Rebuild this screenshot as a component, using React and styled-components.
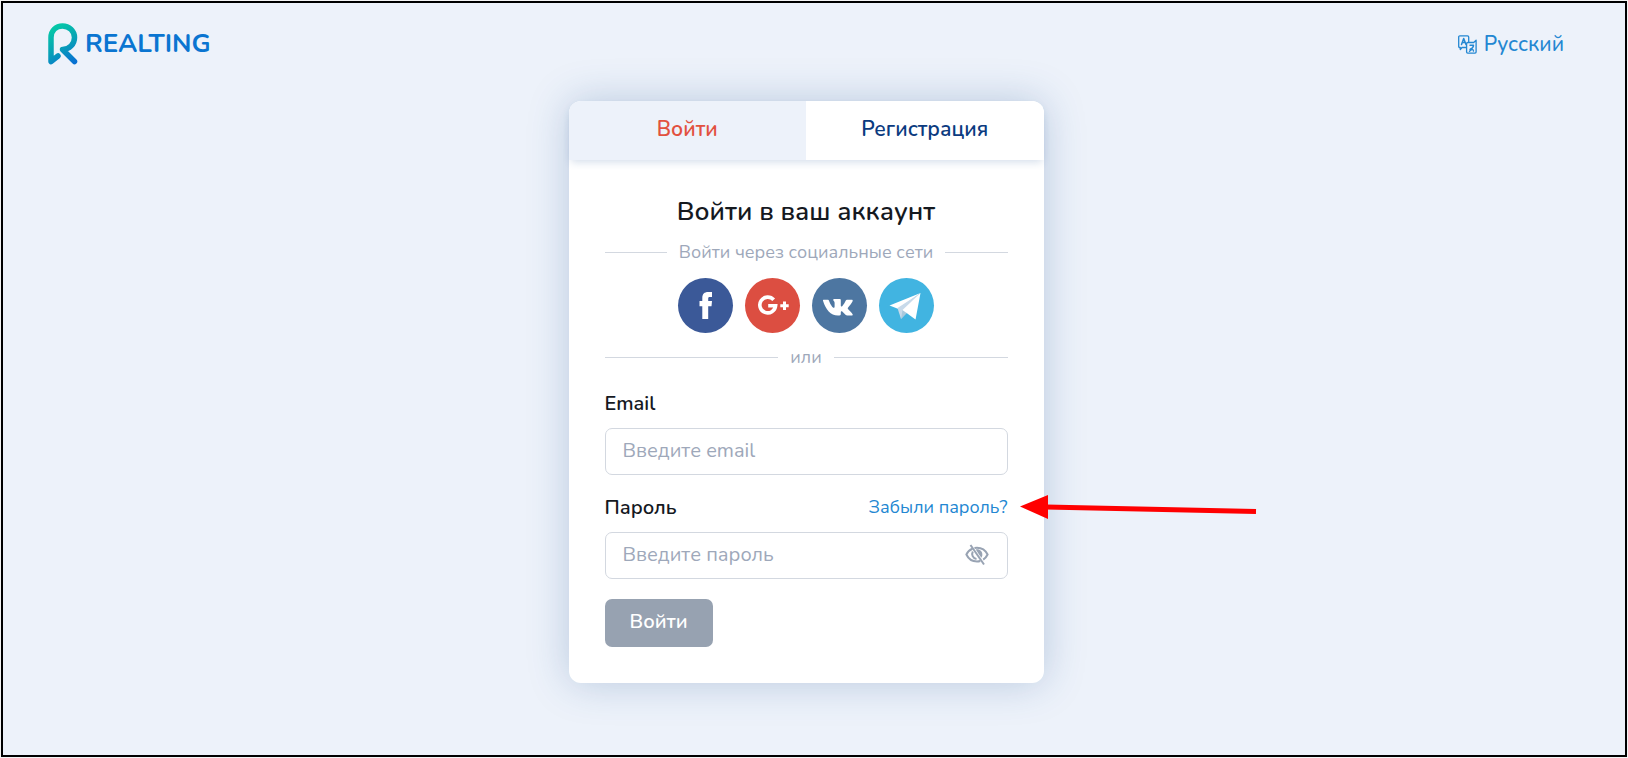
import React, { useState } from 'react';
import styled, { createGlobalStyle } from 'styled-components';


const GlobalStyle = createGlobalStyle`
  * {
    box-sizing:border-box;
  }
  body {
    margin:0;
    background-color:#f4f4f4;
    font-family:Nunito, Lato, "Open Sans", sans-serif;
  }
`

const Page = styled.div`
  min-height:calc(100vh - 2px);
  margin:1px;
  border:2px solid #000000;
  background-color:#edf2fa;
  padding:0 61px 70px 45px;
`

const Header = styled.header`
  display:flex;
  justify-content:space-between;
  align-items:center;
  height:82px;
`

const Logo = styled.a`
  display:flex;
  align-items:center;
  gap:7px;
  color:#0a75d1;
  font-family:Nunito, Lato, sans-serif;
  font-size:26px;
  font-weight:700;
  line-height:42px;
  text-decoration:none;
`

const Language = styled.button`
  display:flex;
  align-items:center;
  gap:7px;
  padding:0;
  border:none;
  background:none;
  color:#2387d2;
  font-family:inherit;
  font-size:21px;
  font-weight:500;
  line-height:28px;
  cursor:pointer;
`

const Card = styled.main`
  width:100%;
  max-width:475px;
  margin:16px auto 0;
  border-radius:12px;
  background-color:#ffffff;
  box-shadow:0 0 40px rgba(34, 84, 148, 0.26);
`

const Tabs = styled.div`
  display:flex;
  border-radius:12px 12px 0 0;
  overflow:hidden;
  box-shadow:0 4px 8px -2px rgba(34, 84, 148, 0.2);
`

const Tab = styled.button`
  flex:1;
  height:59px;
  padding:0 0 4px;
  border:none;
  background-color:${(props) => (props.$active ? '#edf2fa' : '#ffffff')};
  color:${(props) => (props.$active ? '#e2513f' : '#0b3b80')};
  font-family:inherit;
  font-size:21px;
  font-weight:600;
  cursor:pointer;
`

const Form = styled.form`
  padding:32px 36px 36px;
`

const Title = styled.h1`
  margin:0;
  color:#15191f;
  font-size:26px;
  font-weight:600;
  line-height:40px;
  text-align:center;
`

const Divider = styled.div`
  display:flex;
  align-items:center;
  gap:12px;
  color:#9ea8ba;
  font-size:18px;
  line-height:24px;
  margin:${(props) => props.$margin};
  &::before, &::after {
    content:"";
    flex:1;
    height:1px;
    background-color:#d3d8e0;
  }
`

const Socials = styled.div`
  display:flex;
  justify-content:center;
  gap:12px;
`

const Social = styled.button`
  width:55px;
  height:55px;
  padding:0;
  border:none;
  border-radius:50%;
  background-color:${(props) => props.$color};
  cursor:pointer;
  svg {
    display:block;
  }
`

const LabelRow = styled.div`
  display:flex;
  justify-content:space-between;
  align-items:center;
  height:28px;
  margin-bottom:11px;
`

const Label = styled.label`
  color:#15191f;
  font-size:20px;
  font-weight:600;
`

const Forgot = styled.a`
  position:relative;
  color:#2387d2;
  font-size:18px;
  text-decoration:none;
`

const Arrow = styled.svg`
  position:absolute;
  left:calc(100% + 12px);
  top:0;
  pointer-events:none;
`

const Field = styled.div`
  display:flex;
  align-items:center;
  height:47px;
  margin-bottom:${(props) => props.$gap};
  padding:0 18px 2px 17px;
  border:1px solid #d3d8e0;
  border-radius:7px;
`

const Input = styled.input`
  flex:1;
  min-width:0;
  height:100%;
  padding:0;
  border:none;
  outline:none;
  background:none;
  color:#15191f;
  font-family:inherit;
  font-size:20px;
  &::placeholder {
    color:#9ea8ba;
    opacity:1;
  }
`

const EyeButton = styled.button`
  display:flex;
  padding:0;
  border:none;
  background:none;
  color:#98a3b3;
  cursor:pointer;
`

const Submit = styled.button`
  display:block;
  height:48px;
  padding:0 25px 4px;
  border:none;
  border-radius:7px;
  background-color:#97a2b1;
  color:#ffffff;
  font-family:inherit;
  font-size:20px;
  font-weight:600;
  cursor:pointer;
`

const LogoMark = () => (
  <svg width="30" height="42" viewBox="0 0 30 42" fill="none" aria-hidden="true">
    <defs>
      <linearGradient id="mark" x1="6" y1="2" x2="28" y2="38" gradientUnits="userSpaceOnUse">
        <stop offset="0" stopColor="#05cba6" />
        <stop offset="0.5" stopColor="#07a3b5" />
        <stop offset="1" stopColor="#0871d2" />
      </linearGradient>
    </defs>
    <path d="M10 33L3 38.500V14.500C3 7.500 8 3 14.500 3S26.500 8 26.500 14.500C26.500 21 21.500 26.500 14.500 26.500L26.500 38.500" stroke="url(#mark)" strokeWidth="5.500" strokeLinecap="round" strokeLinejoin="round" />
  </svg>
)

const TranslateIcon = () => (
  <svg width="19" height="19" viewBox="0 0 19 19" fill="none" stroke="currentColor" strokeWidth="1.300" strokeLinejoin="round" strokeLinecap="round" aria-hidden="true">
    <path d="M8 12.500H4L2.300 14.500V12.500H1.800Q.7 12.500.7 11.300V2Q.7.800 1.900.8H9.500Q10.700.8 10.700 2V6.800" />
    <path d="M3.500 9.500L5.700 3.500 8 9.500M4.300 7.500H7.100" strokeWidth="1.500" />
    <path d="M11 7.500H15.700L18.100 5.300V17.100Q18.100 18.200 17 18.200H9.700Q8.600 18.200 8.600 17.100V8.700Q8.600 7.500 9.800 7.500Z" />
    <path d="M12 10.300H15.500C15.500 12 14 13.500 12 14.500C13 13 15 14 15.500 16M11.500 16.300L13.200 15" strokeWidth="1.400" />
  </svg>
)

const FacebookIcon = () => (
  <svg width="55" height="55" viewBox="0 0 55 55" fill="#ffffff" aria-hidden="true">
    <path d="M24.300 41V28.300H21.500V23H24.300V20C24.300 16 26.300 14 30.200 14H34V19H31.700C30.500 19 30.200 19.600 30.200 20.600V23H34L33.500 28.300H30.200V41Z" />
  </svg>
)

const GoogleIcon = () => (
  <svg width="55" height="55" viewBox="0 0 55 55" fill="none" stroke="#ffffff" aria-hidden="true">
    <path d="M28.700 21.800A7.900 7.900 0 1 0 30.600 27.800H23.200" strokeWidth="3.600" />
    <path d="M39.500 23.500V32M35.300 27.800H43.700" strokeWidth="3" />
  </svg>
)

const VkIcon = () => (
  <svg width="55" height="55" viewBox="0 0 55 55" fill="#ffffff" aria-hidden="true">
    <path d="M26 37.500C18.500 37.500 13.800 31.500 11 22.700C10.800 22.100 11.200 21.700 11.800 21.700H15.700C16.400 21.700 16.700 22 17 22.700C18.600 27 20.600 29.700 21.800 29.700C22.300 29.700 22.600 29.300 22.600 28.200V24.700C22.500 22.700 21.200 22.700 21.200 21.900C21.200 21.300 21.700 20.900 22.500 20.900H27.600C28.500 20.900 28.800 21.300 28.800 22.300V27.800C28.800 28.700 29.700 28.900 30.400 28C31.900 26.300 33 24.200 33.800 22.500C34.100 21.900 34.400 21.700 35 21.700H39.500C40.700 21.700 41 22.300 40.600 23.200C39.700 25.200 37.600 27.700 36.100 29.500C35.600 30.200 35.600 30.500 36.200 31.200C37.600 32.700 39.800 34.600 40.600 36.200C41 37 40.500 37.500 39.500 37.500H35.300C34.500 37.500 34 37.300 33.500 36.700L30.500 33.700C29.600 32.900 28.800 33.100 28.800 34.200V36C28.800 37.100 28.200 37.500 26 37.500Z" />
  </svg>
)

const TelegramIcon = () => (
  <svg width="55" height="55" viewBox="0 0 55 55" aria-hidden="true">
    <path d="M10.500 27.500L41.500 15 19.500 31Z" fill="#ffffff" />
    <path d="M18.500 30L22 41 27 35 41.500 15Z" fill="#c8daea" />
    <path d="M23.500 32L22 41 28 35Z" fill="#a9c9dd" />
    <path d="M23.500 32L41.500 15 36.500 41.500Z" fill="#ffffff" />
  </svg>
)

const EyeOffIcon = () => (
  <svg width="24" height="22" viewBox="0 0 24 22" fill="none" stroke="currentColor" aria-hidden="true">
    <path d="M7.500 4.800C4.500 6 2.500 8 1.400 10.500C3.500 15 7.500 17.500 12 17.500Q13.700 17.500 15.300 17M9.500 4Q10.800 3.700 12 3.700C16.500 3.700 20.500 6.200 22.600 10.500C21.600 12.700 20.200 14.200 18.200 15.600" strokeWidth="2" />
    <path d="M7.800 7.500C6.200 10.500 7.800 14.500 11.500 15" strokeWidth="2" />
    <path d="M10.800 5.500C14.500 4.700 17.700 7.500 17.300 11.300Q17.100 12.700 16.400 13.800L14.200 10.700Z" fill="currentColor" stroke="none" />
    <path d="M5.500 1L19 20.500" strokeWidth="2" />
  </svg>
)

const socials = [
  { name: 'Facebook', color: '#3b5998', Icon: FacebookIcon },
  { name: 'Google', color: '#dc4e41', Icon: GoogleIcon },
  { name: 'VK', color: '#4d76a1', Icon: VkIcon },
  { name: 'Telegram', color: '#41b4e1', Icon: TelegramIcon },
]

const App = () => {
  const [tab, setTab] = useState('login');
  const [email, setEmail] = useState('');
  const [password, setPassword] = useState('');
  const [visible, setVisible] = useState(false);

  return (
    <>
      <GlobalStyle />
      <Page>
        <Header>
          <Logo href="#">
            <LogoMark />
            REALTING
          </Logo>
          <Language type="button">
            <TranslateIcon />
            Русский
          </Language>
        </Header>

        <Card>
          <Tabs>
            <Tab type="button" $active={tab === 'login'} onClick={() => setTab('login')}>
              Войти
            </Tab>
            <Tab type="button" $active={tab === 'register'} onClick={() => setTab('register')}>
              Регистрация
            </Tab>
          </Tabs>

          <Form onSubmit={(e) => e.preventDefault()}>
            <Title>Войти в ваш аккаунт</Title>
            <Divider $margin="8px 0 14px">Войти через социальные сети</Divider>
            <Socials>
              {socials.map(({ name, color, Icon }) => (
                <Social key={name} type="button" $color={color} aria-label={name}>
                  <Icon />
                </Social>
              ))}
            </Socials>
            <Divider $margin="12px 0 20px">или</Divider>

            <LabelRow>
              <Label htmlFor="email">Email</Label>
            </LabelRow>
            <Field $gap="18px">
              <Input
                id="email"
                type="email"
                placeholder="Введите email"
                value={email}
                onChange={(e) => setEmail(e.target.value)}
              />
            </Field>

            <LabelRow>
              <Label htmlFor="password">Пароль</Label>
              <Forgot href="#">
                Забыли пароль?
                {/* pointer to the recovery link */}
                <Arrow width="237" height="24" viewBox="0 0 237 24" aria-hidden="true">
                  <path d="M26 12L236 16.500" stroke="#ff0000" strokeWidth="5" />
                  <path d="M0 11.500L28 0V24Z" fill="#ff0000" />
                </Arrow>
              </Forgot>
            </LabelRow>
            <Field $gap="20px">
              <Input
                id="password"
                type={visible ? 'text' : 'password'}
                placeholder="Введите пароль"
                value={password}
                onChange={(e) => setPassword(e.target.value)}
              />
              <EyeButton type="button" aria-label="Показать пароль" onClick={() => setVisible(!visible)}>
                <EyeOffIcon />
              </EyeButton>
            </Field>

            <Submit type="submit">Войти</Submit>
          </Form>
        </Card>
      </Page>
    </>
  );
}

export default App;
